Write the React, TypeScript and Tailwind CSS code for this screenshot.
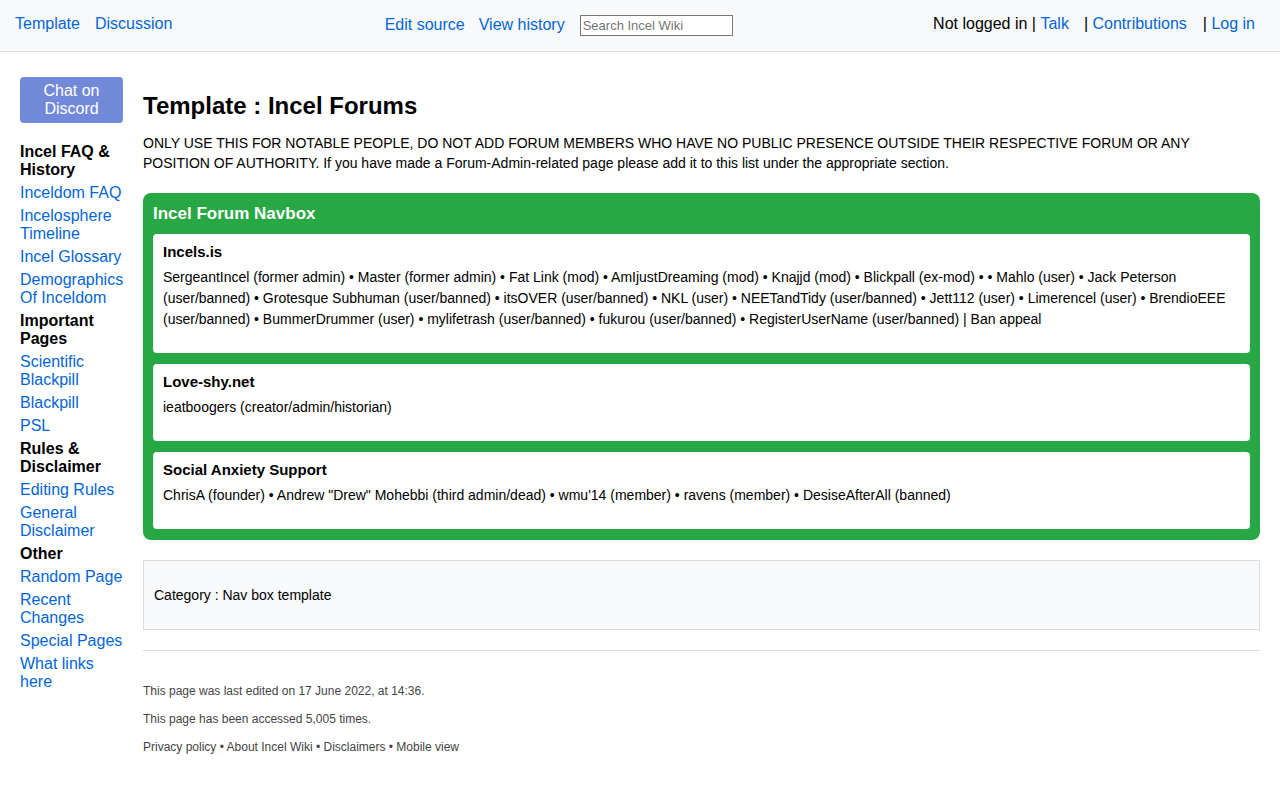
import React from 'react';

// ─── Data ─────────────────────────────────────────────────────────────────────

type SideItem = { label: string; heading?: boolean };

const SIDEBAR: SideItem[] = [
  { label: 'Incel FAQ & History', heading: true },
  { label: 'Inceldom FAQ' },
  { label: 'Incelosphere Timeline' },
  { label: 'Incel Glossary' },
  { label: 'Demographics Of Inceldom' },
  { label: 'Important Pages', heading: true },
  { label: 'Scientific Blackpill' },
  { label: 'Blackpill' },
  { label: 'PSL' },
  { label: 'Rules & Disclaimer', heading: true },
  { label: 'Editing Rules' },
  { label: 'General Disclaimer' },
  { label: 'Other', heading: true },
  { label: 'Random Page' },
  { label: 'Recent Changes' },
  { label: 'Special Pages' },
  { label: 'What links here' },
];

const FORUMS = [
  {
    title: 'Incels.is',
    body:
      'SergeantIncel (former admin) • Master (former admin) • Fat Link (mod) • AmIjustDreaming (mod) • Knajjd (mod) • Blickpall (ex-mod) • • Mahlo (user) • Jack Peterson (user/banned) • Grotesque Subhuman (user/banned) • itsOVER (user/banned) • NKL (user) • NEETandTidy (user/banned) • Jett112 (user) • Limerencel (user) • BrendioEEE (user/banned) • BummerDrummer (user) • mylifetrash (user/banned) • fukurou (user/banned) • RegisterUserName (user/banned) | Ban appeal',
  },
  {
    title: 'Love-shy.net',
    body: 'ieatboogers (creator/admin/historian)',
  },
  {
    title: 'Social Anxiety Support',
    body:
      'ChrisA (founder) • Andrew "Drew" Mohebbi (third admin/dead) • wmu\'14 (member) • ravens (member) • DesiseAfterAll (banned)',
  },
];

const LINK = 'text-[#0366d6]';

// ─── Header ───────────────────────────────────────────────────────────────────

function Header() {
  return (
    <header className="h-[52px] bg-[#f8f9fa] border-b border-[#dddddd] flex items-center justify-between pl-[15px] pr-[25px] text-[16px] leading-[20px]">
      <div className="flex gap-[15px] -mt-[3px]">
        <a className={LINK}>Template</a>
        <a className={LINK}>Discussion</a>
      </div>
      <div className="flex items-center gap-[14px] ml-[12px] -mt-[1px]">
        <a className={LINK}>Edit source</a>
        <a className={LINK}>View history</a>
        <input
          placeholder="Search Incel Wiki"
          className="ml-[1px] w-[153px] h-[21px] border border-[#767676] bg-white px-[2px] text-[13px] placeholder:text-[#757575] outline-none"
        />
      </div>
      <div className="flex items-center -mt-[3px]">
        <span>Not logged in |&nbsp;</span>
        <a className={LINK}>Talk</a>
        <span className="ml-[15px]">|&nbsp;</span>
        <a className={LINK}>Contributions</a>
        <span className="ml-[16px]">|&nbsp;</span>
        <a className={LINK}>Log in</a>
      </div>
    </header>
  );
}

// ─── Sidebar ──────────────────────────────────────────────────────────────────

function Sidebar() {
  return (
    <aside className="w-[103px] shrink-0 pt-[25px]">
      <button
        type="button"
        className="w-[103px] h-[46px] rounded-[4px] bg-[#7289da] text-white text-[16px] leading-[18px] flex items-center justify-center text-center"
      >
        Chat on
        <br />
        Discord
      </button>
      <ul className="mt-[20px] text-[16px] leading-[18px]">
        {SIDEBAR.map((it) => (
          <li
            key={it.label}
            className={it.heading ? 'mb-[5px] font-bold text-black' : `mb-[5px] ${LINK}`}
          >
            {it.label}
          </li>
        ))}
      </ul>
    </aside>
  );
}

// ─── Navbox ───────────────────────────────────────────────────────────────────

function Navbox() {
  return (
    <div className="mt-[20px] bg-[#28a745] rounded-[8px] px-[10px] pt-[11px] pb-[11px]">
      <h2 className="text-white font-bold text-[17px] leading-[20px] mb-[10px]">Incel Forum Navbox</h2>
      <div className="flex flex-col gap-[11px]">
        {FORUMS.map((f) => (
          <div key={f.title} className="bg-white rounded-[4px] px-[10px] pt-[9px] pb-[23px]">
            <h3 className="font-bold text-[15px] leading-[18px] mb-[6px]">{f.title}</h3>
            <p className="text-[14px] leading-[21px]">{f.body}</p>
          </div>
        ))}
      </div>
    </div>
  );
}

// ─── App ──────────────────────────────────────────────────────────────────────

export default function App() {
  return (
    <div className="min-h-[789px] bg-white text-black" style={{ fontFamily: '"Liberation Sans", Arial, sans-serif' }}>
      <Header />
      <div className="flex gap-[20px] pl-[20px] pr-[20px]">
        <Sidebar />
        <main className="flex-1 min-w-0 pt-[40px]">
          <h1 className="text-[24px] leading-[28px] font-bold">Template : Incel Forums</h1>
          <p className="mt-[13px] text-[14px] leading-[20px]">
            ONLY USE THIS FOR NOTABLE PEOPLE, DO NOT ADD FORUM MEMBERS WHO HAVE NO PUBLIC PRESENCE OUTSIDE THEIR RESPECTIVE FORUM OR ANY POSITION OF AUTHORITY. If you have made a Forum-Admin-related page please add it to this list under the appropriate section.
          </p>
          <Navbox />
          <div className="mt-[20px] h-[70px] bg-[#f8f9fa] border border-[#dddddd] flex items-center px-[10px] text-[14px]">
            Category : Nav box template
          </div>
          <hr className="mt-[20px] border-0 border-t border-[#dddddd]" />
          <footer className="pt-[33px] text-[12px] leading-[14px] text-[#444444] flex flex-col gap-[14px]">
            <p>This page was last edited on 17 June 2022, at 14:36.</p>
            <p>This page has been accessed 5,005 times.</p>
            <p>Privacy policy • About Incel Wiki • Disclaimers • Mobile view</p>
          </footer>
        </main>
      </div>
    </div>
  );
}
